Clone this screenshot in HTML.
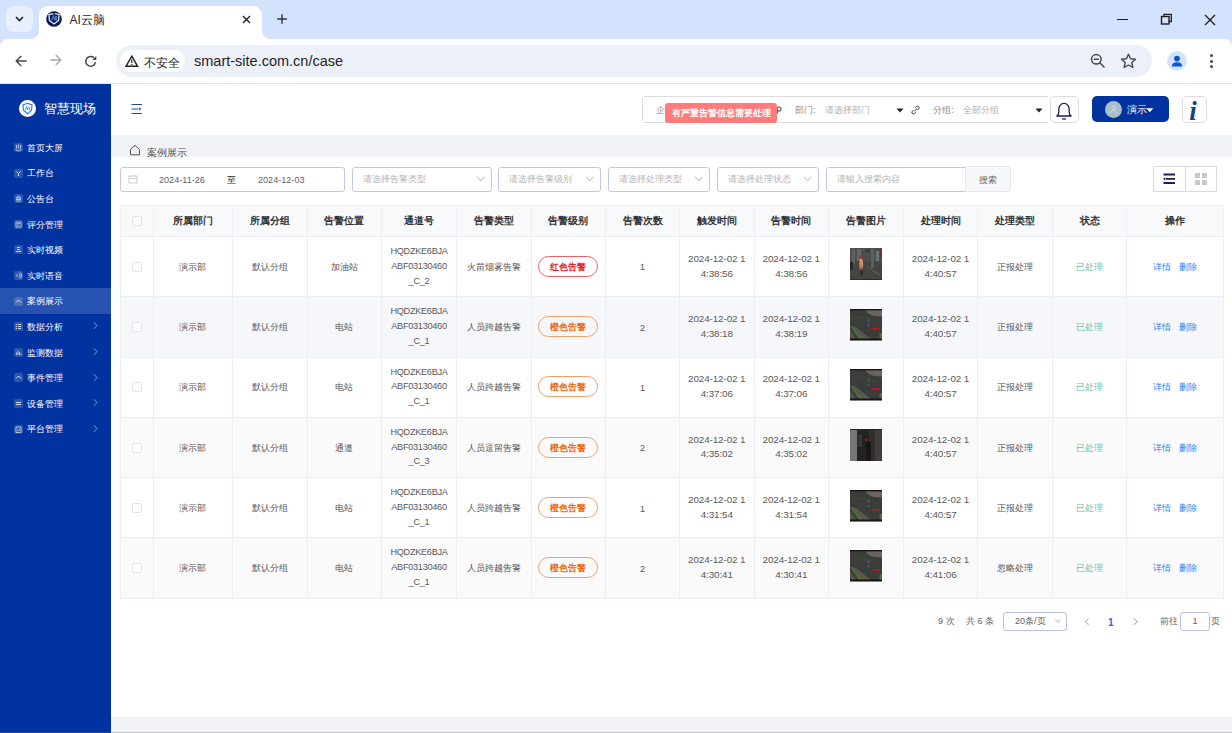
<!DOCTYPE html>
<html><head><meta charset="utf-8">
<style>
*{box-sizing:border-box}
html,body{margin:0;padding:0;width:1232px;height:733px;overflow:hidden;background:#fff;font-family:"Liberation Sans",sans-serif}
.a{position:absolute}
.nw{white-space:nowrap}
/* chrome */
#tabstrip{left:0;top:0;width:1232px;height:48px;background:#d3e3fd}
#toolbar{left:0;top:39px;width:1232px;height:44px;background:#fff;border-radius:8px 8px 0 0}
#tbline{left:0;top:83px;width:1232px;height:1px;background:#e3e3e3}
/* sidebar */
#side{left:0;top:84px;width:111px;height:649px;background:#0033a0}
.mi{position:absolute;left:0;width:111px;height:26px;color:#fff;font-size:9px;line-height:26px}
.mi .ic{position:absolute;left:13.5px;top:9px;width:9px;height:9px;border-radius:2px;background:rgba(255,255,255,.2);opacity:.85}
.mi .tx{position:absolute;left:27px;top:0.8px}
.mi .ar{position:absolute;left:91.5px;top:10.3px;width:4.5px;height:4.5px;border-right:1px solid rgba(255,255,255,.38);border-top:1px solid rgba(255,255,255,.38);transform:rotate(45deg)}
/* content */
#gray1{left:111px;top:135px;width:1121px;height:22px;background:#f0f2f5}
#gray2{left:111px;top:717px;width:1121px;height:16px;background:#f0f2f5}
.inp{position:absolute;top:167px;height:25px;border:1px solid #c0c6e6;border-radius:3px;background:#fff;font-size:9px;color:#b4b4b4;line-height:23px}
.inp .ph{position:absolute;left:10px;top:0}
.inp .dd{position:absolute;right:7.5px;top:6.2px;width:5.5px;height:5.5px;border-right:1px solid #b8bcc8;border-bottom:1px solid #b8bcc8;transform:rotate(45deg)}
table.t{position:absolute;left:120px;top:205px;border-collapse:collapse;table-layout:fixed;width:1104px}
.t td,.t th{border:1px solid #ebeef5;text-align:center;padding:0;font-size:9px;color:#555}
.t td{padding-top:1.4px}
.t th{height:31px;background:#f8f9fb;color:#303133;font-weight:bold;font-size:10px}
.t td{height:60.3px}
.t tr.s td{background:#fafafa}
.t tr.s2 td{background:#f5f7fa}
.cb{display:inline-block;width:10px;height:10px;border:1px solid #e2e4ea;border-radius:2px;background:#fff;vertical-align:middle;position:relative;top:-1px}
.code{font-size:9.2px;letter-spacing:-0.3px;line-height:14.8px;position:relative;top:-1.2px;color:#5a5a5a}
.dt{font-size:9.9px;letter-spacing:-0.12px;line-height:14.8px;position:relative;top:-0.8px;color:#5a5a5a}
.badge{display:inline-block;width:60px;height:21px;border:1px solid #e86464;border-radius:10.5px;color:#e01e1e;font-weight:bold;font-size:9px;line-height:20.5px;position:relative;top:-1px;vertical-align:middle}
.badge.o{border-color:#f0a06c;color:#ea6c14}
.thumb{display:inline-block;width:32px;height:32px;vertical-align:middle;position:relative;top:-3px}
.ok{color:#6cc0ac}
.lk{color:#2f7ff2}
</style></head>
<body>
<!-- ============ BROWSER CHROME ============ -->
<div id="tabstrip" class="a"></div>
<div class="a" style="left:6px;top:6px;width:27px;height:26px;border-radius:8px;background:#e9f0fd"></div>
<svg class="a" style="left:14px;top:14px" width="11" height="10" viewBox="0 0 11 10"><path d="M2 3 L5.5 6.5 L9 3" fill="none" stroke="#1f1f1f" stroke-width="1.6"/></svg>
<div class="a" style="left:39px;top:6px;width:223px;height:34px;background:#fff;border-radius:9px 9px 0 0"></div>
<div class="a" style="left:30px;top:30px;width:9px;height:9px;background:radial-gradient(circle at 0 0,#d3e3fd 9px,#fff 9.5px)"></div>
<div class="a" style="left:262px;top:30px;width:9px;height:9px;background:radial-gradient(circle at 100% 0,#d3e3fd 9px,#fff 9.5px)"></div>
<svg class="a" style="left:46px;top:11px" width="16" height="16" viewBox="0 0 16 16"><circle cx="8" cy="8" r="7.8" fill="#07184a"/><path d="M7.3 2.9 Q5 2.6 2.9 3.6 L3.5 9.6 L8 12.9 L12.5 9.6 L13.1 3.6 Q11 2.6 8.7 2.9" fill="none" stroke="#e6ebf5" stroke-width="1.3" stroke-linejoin="round"/><path d="M5.8 9.3 L7.3 5 L8.8 9.3" fill="none" stroke="#2f7df6" stroke-width="1.3"/><path d="M10 5 V9.3" stroke="#c8d4ea" stroke-width="1"/><path d="M6.8 9 L7.3 8 L7.8 9" fill="#c0502a"/></svg>
<div class="a nw" style="left:69.5px;top:12px;font-size:12px;line-height:17px;color:#1f1f1f">AI云脑</div>
<svg class="a" style="left:242px;top:15px" width="9" height="9" viewBox="0 0 9 9"><path d="M1 1 L8 8 M8 1 L1 8" stroke="#1f1f1f" stroke-width="1.35"/></svg>
<svg class="a" style="left:276px;top:13px" width="12" height="12" viewBox="0 0 12 12"><path d="M6 1.3 V10.8 M1.2 6 H10.8" stroke="#333" stroke-width="1.4"/></svg>
<!-- window controls -->
<div class="a" style="left:1117px;top:19px;width:11px;height:1.3px;background:#1f1f1f"></div>
<svg class="a" style="left:1160px;top:13px" width="13" height="12" viewBox="0 0 13 12"><rect x="1.5" y="3.5" width="7.5" height="7.5" fill="none" stroke="#1f1f1f" stroke-width="1.4"/><path d="M4 3.5 V1.3 H11.3 V8.5 H9" fill="none" stroke="#1f1f1f" stroke-width="1.3"/></svg>
<svg class="a" style="left:1204px;top:14px" width="12" height="12" viewBox="0 0 12 12"><path d="M1 1 L11 11 M11 1 L1 11" stroke="#1f1f1f" stroke-width="1.4"/></svg>

<div id="toolbar" class="a"></div>
<div id="tbline" class="a"></div>
<!-- nav -->
<svg class="a" style="left:13px;top:52.5px" width="16" height="16" viewBox="0 0 16 16"><path d="M13.7 8 H3.5 M8.2 3 L3.2 8 L8.2 13" fill="none" stroke="#474747" stroke-width="1.4"/></svg>
<svg class="a" style="left:48px;top:52.3px" width="16" height="16" viewBox="0 0 16 16"><path d="M2.3 8 H12.5 M7.8 3 L12.8 8 L7.8 13" fill="none" stroke="#a8a8a8" stroke-width="1.3"/></svg>
<svg class="a" style="left:83px;top:52.5px" width="16" height="16" viewBox="0 0 16 16"><path d="M10.9 4.6 A4.9 4.9 0 1 0 12.5 9.2" fill="none" stroke="#474747" stroke-width="1.5"/><path d="M9.2 7 H13.3 V2.9 Z" fill="#474747"/></svg>
<!-- omnibox -->
<div class="a" style="left:116px;top:45px;width:1036px;height:32px;border-radius:16px;background:#ecf1f9"></div>
<div class="a" style="left:120px;top:50px;width:65px;height:22px;border-radius:11px;background:#fff"></div>
<svg class="a" style="left:124px;top:54px" width="16" height="15" viewBox="0 0 16 15"><path d="M7.8 2.2 L13.6 12.3 H2 Z" fill="none" stroke="#1f1f1f" stroke-width="1.4" stroke-linejoin="miter"/><path d="M7.8 5.6 V9 M7.8 10 V11" stroke="#1f1f1f" stroke-width="1.2"/></svg>
<div class="a nw" style="left:143.8px;top:54.5px;font-size:11.5px;line-height:16px;color:#1f1f1f">不安全</div>
<div class="a nw" style="left:194px;top:52px;font-size:14.5px;line-height:18px;color:#1f1f1f">smart-site.com.cn/case</div>
<svg class="a" style="left:1090px;top:53px" width="16" height="16" viewBox="0 0 16 16"><circle cx="6.3" cy="6.3" r="4.8" fill="none" stroke="#474747" stroke-width="1.5"/><path d="M3.8 6.3 H8.8 M9.8 9.8 L14.5 14.5" stroke="#474747" stroke-width="1.5"/></svg>
<svg class="a" style="left:1120px;top:53px" width="17" height="16" viewBox="0 0 17 16"><path d="M8.5 1.3 L10.6 5.8 L15.5 6.3 L11.8 9.6 L12.9 14.5 L8.5 12 L4.1 14.5 L5.2 9.6 L1.5 6.3 L6.4 5.8 Z" fill="none" stroke="#474747" stroke-width="1.4" stroke-linejoin="round"/></svg>
<div class="a" style="left:1167px;top:51px;width:20px;height:20px;border-radius:50%;background:#d3e3fd"></div>
<svg class="a" style="left:1170px;top:54px" width="14" height="14" viewBox="0 0 14 14"><circle cx="7" cy="4.6" r="2.9" fill="#0b57d0"/><path d="M1.8 12.5 C2.2 9 4.5 8.3 7 8.3 C9.5 8.3 11.8 9 12.2 12.5 Z" fill="#0b57d0"/></svg>
<div class="a" style="left:1210px;top:54px;width:3.2px;height:3.2px;border-radius:50%;background:#474747"></div>
<div class="a" style="left:1210px;top:59.5px;width:3.2px;height:3.2px;border-radius:50%;background:#474747"></div>
<div class="a" style="left:1210px;top:65px;width:3.2px;height:3.2px;border-radius:50%;background:#474747"></div>

<!-- ============ SIDEBAR ============ -->
<div id="side" class="a"></div>
<div class="a" style="left:0;top:288px;width:111px;height:26px;background:#2652b0"></div>
<div class="a" style="left:19px;top:100px;width:17px;height:17px;border-radius:50%;background:#fff"></div>
<svg class="a" style="left:21px;top:102px" width="13" height="13" viewBox="0 0 13 13"><path d="M6.5 1.3 L11 3 L10.5 8.3 L6.5 11.8 L2.5 8.3 L2 3 Z" fill="none" stroke="#2f7de1" stroke-width="1.2"/><path d="M4.6 8.2 L5.8 4.6 L7 8.2 M8.3 4.6 V8.2" fill="none" stroke="#2f7de1" stroke-width="0.9"/></svg>
<div class="a nw" style="left:43.5px;top:101px;font-size:13px;line-height:16px;color:#fff">智慧现场</div>
<div class="mi" style="top:134.0px"><svg class="ic" width="9" height="9" viewBox="0 0 9 9"><path d="M2.5 2 V5.5 M4.5 1.5 V5.5 M6.5 2 V5.5 M1.5 6.5 L4.5 8 L7.5 6.5" stroke="#fff" stroke-width="0.8" fill="none"/></svg><span class="tx">首页大屏</span></div>
<div class="mi" style="top:159.6px"><svg class="ic" width="9" height="9" viewBox="0 0 9 9"><path d="M2.5 2.5 L4.5 4.5 L6.5 2.5 M4.5 4.5 V7" stroke="#fff" stroke-width="1" fill="none"/></svg><span class="tx">工作台</span></div>
<div class="mi" style="top:185.2px"><svg class="ic" width="9" height="9" viewBox="0 0 9 9"><path d="M2 4 L4.5 2 L7 4 Z M2 5.5 H7 M2 7 H7" stroke="#fff" stroke-width="0.8" fill="none"/></svg><span class="tx">公告台</span></div>
<div class="mi" style="top:210.8px"><svg class="ic" width="9" height="9" viewBox="0 0 9 9"><path d="M2 2 H7 V7 H2 Z M3 3.5 H6 M3 5 H5" stroke="#fff" stroke-width="0.7" fill="none"/></svg><span class="tx">评分管理</span></div>
<div class="mi" style="top:236.4px"><svg class="ic" width="9" height="9" viewBox="0 0 9 9"><path d="M3 2.5 H6 M3 4.5 H6 M2 6.5 H7" stroke="#fff" stroke-width="0.9" fill="none"/></svg><span class="tx">实时视频</span></div>
<div class="mi" style="top:262.0px"><svg class="ic" width="9" height="9" viewBox="0 0 9 9"><path d="M3 3 V6 M4.8 2.3 A2.5 2.5 0 0 1 4.8 6.7 M6 1.5 A3.5 3.5 0 0 1 6 7.5" stroke="#fff" stroke-width="0.8" fill="none"/></svg><span class="tx">实时语音</span></div>
<div class="mi" style="top:287.6px"><svg class="ic" width="9" height="9" viewBox="0 0 9 9"><path d="M2 5.5 L4.5 3 L7 5.5" stroke="#fff" stroke-width="1" fill="none"/></svg><span class="tx">案例展示</span></div>
<div class="mi" style="top:313.2px"><svg class="ic" width="9" height="9" viewBox="0 0 9 9"><path d="M1.8 2.5 H3 M4 2.5 H7.2 M1.8 4.5 H3 M4 4.5 H7.2 M1.8 6.5 H3 M4 6.5 H7.2" stroke="#fff" stroke-width="0.9" fill="none"/></svg><span class="tx">数据分析</span><i class="ar"></i></div>
<div class="mi" style="top:338.8px"><svg class="ic" width="9" height="9" viewBox="0 0 9 9"><path d="M2.5 7 V4.5 M4 7 V2.5 M5.5 7 V4 M7 7 V5.5" stroke="#fff" stroke-width="0.8" fill="none"/></svg><span class="tx">监测数据</span><i class="ar"></i></div>
<div class="mi" style="top:364.4px"><svg class="ic" width="9" height="9" viewBox="0 0 9 9"><path d="M2 5.5 L4.5 3 L7 5.5" stroke="#fff" stroke-width="1" fill="none"/></svg><span class="tx">事件管理</span><i class="ar"></i></div>
<div class="mi" style="top:390.0px"><svg class="ic" width="9" height="9" viewBox="0 0 9 9"><path d="M2 3.5 H7 M2 5.5 H7" stroke="#fff" stroke-width="1" fill="none"/></svg><span class="tx">设备管理</span><i class="ar"></i></div>
<div class="mi" style="top:415.6px"><svg class="ic" width="9" height="9" viewBox="0 0 9 9"><path d="M2 2 H7 V7.5 H2 Z M3.2 5 L4.3 6 L6 3.8" stroke="#fff" stroke-width="0.7" fill="none"/></svg><span class="tx">平台管理</span><i class="ar"></i></div>

<!-- ============ HEADER ============ -->

<svg class="a" style="left:130px;top:103px" width="13" height="13" viewBox="0 0 13 13"><path d="M1.5 1.5 H12 M1.5 6 H8.3 M1.5 10.5 H12" stroke="#24488f" stroke-width="1.1"/><path d="M9.2 4.4 L11.6 6 L9.2 7.6 Z" fill="#24488f"/></svg>
<!-- filter box -->
<div class="a" style="left:644px;top:96px;width:404px;height:27px;border-top:1px solid #dcdcdc;border-bottom:1px solid #dcdcdc"></div><div class="a" style="left:642px;top:98px;width:1px;height:23px;background:#dcdcdc"></div>
<div class="a nw" style="left:656px;top:104px;font-size:9px;line-height:12px;color:#999">企</div>
<svg class="a" style="left:776px;top:106px" width="6" height="8" viewBox="0 0 6 8"><circle cx="3" cy="3" r="2" fill="none" stroke="#555" stroke-width="1.1"/><path d="M2 5 L1.2 7.5" stroke="#555" stroke-width="1"/></svg>
<div class="a nw" style="left:795px;top:104px;font-size:9px;line-height:12px;color:#888">部门:</div>
<div class="a nw" style="left:825px;top:104px;font-size:9px;line-height:12px;color:#b0b0b0">请选择部门</div>
<svg class="a" style="left:896px;top:108px" width="8" height="5" viewBox="0 0 8 5"><path d="M0.5 0.5 H7.5 L4 4.5 Z" fill="#222"/></svg>
<svg class="a" style="left:911px;top:105px" width="9" height="10" viewBox="0 0 9 10"><path d="M3.2 6.3 L6 3.5 M4.2 2.7 L5.3 1.6 A1.6 1.6 0 0 1 7.6 3.9 L6.5 5 M2.5 5 L1.4 6.1 A1.6 1.6 0 0 0 3.7 8.4 L4.8 7.3" fill="none" stroke="#333" stroke-width="1"/></svg>
<div class="a nw" style="left:933px;top:104px;font-size:9px;line-height:12px;color:#888">分组:</div>
<div class="a nw" style="left:963px;top:104px;font-size:9px;line-height:12px;color:#b0b0b0">全部分组</div>
<svg class="a" style="left:1035px;top:108px" width="8" height="5" viewBox="0 0 8 5"><path d="M0.5 0.5 H7.5 L4 4.5 Z" fill="#222"/></svg>
<!-- tooltip -->
<div class="a nw" style="left:665px;top:103px;width:112px;height:20px;border-radius:3px;background:#ff7a7a;color:#fff;font-size:9px;line-height:21.5px;font-weight:bold;text-align:center">有严重告警信息需要处理</div>
<!-- bell -->
<div class="a" style="left:1050px;top:96px;width:29px;height:27px;border:1px solid #dcdcdc;border-radius:5px;background:#fff"></div>
<svg class="a" style="left:1054.5px;top:100.5px" width="18" height="20" viewBox="0 0 18 20"><path d="M1.8 15 Q3.8 13.8 3.8 11 V8.2 A5.2 5.8 0 0 1 14.2 8.2 V11 Q14.2 13.8 16.2 15 Z" fill="none" stroke="#1b1f5e" stroke-width="1.3" stroke-linejoin="round"/><path d="M7 18 H11" stroke="#1b1f5e" stroke-width="1.3"/></svg>
<!-- user -->
<div class="a" style="left:1092px;top:96px;width:77px;height:26px;border-radius:5px;background:#0033a0"></div>
<div class="a" style="left:1105px;top:101px;width:17px;height:17px;border-radius:50%;background:#a9bfc8"></div>
<svg class="a" style="left:1109px;top:105px" width="9" height="9" viewBox="0 0 9 9"><circle cx="4.5" cy="3" r="1.7" fill="none" stroke="#d8e4e8" stroke-width="0.8"/><path d="M1.5 8.5 C1.8 6 3 5.5 4.5 5.5 C6 5.5 7.2 6 7.5 8.5" fill="none" stroke="#d8e4e8" stroke-width="0.8"/></svg>
<div class="a nw" style="left:1126.5px;top:103.5px;font-size:9.5px;line-height:12px;color:#fff">演示</div>
<svg class="a" style="left:1145.5px;top:107.5px" width="8" height="5" viewBox="0 0 8 5"><path d="M0.3 0.3 H7.3 L3.8 4.3 Z" fill="#fff"/></svg>
<!-- info -->
<div class="a" style="left:1182px;top:96px;width:25px;height:27px;border:1px solid #dcdcdc;border-radius:5px;background:#fff"></div>
<div class="a nw" style="left:1184.5px;top:97.5px;width:17px;text-align:center;font-family:'Liberation Serif',serif;font-style:italic;font-weight:bold;font-size:27px;line-height:27px;color:#1b3e8c">i</div>


<div id="gray1" class="a"></div>
<svg class="a" style="left:129px;top:144px" width="12" height="12" viewBox="0 0 12 12"><path d="M1.5 5.5 L6 1.3 L10.5 5.5 V10.8 H1.5 Z" fill="none" stroke="#555" stroke-width="1"/></svg>
<div class="a nw" style="left:147px;top:147px;font-size:9.5px;line-height:12px;color:#555">案例展示</div>


<div class="inp" style="left:120px;width:225px">
 <svg class="a" style="left:7px;top:6px" width="10" height="10" viewBox="0 0 10 10"><rect x="1" y="2" width="8" height="7" fill="none" stroke="#c8c8c8" stroke-width="0.9"/><path d="M1 4.5 H9 M3 1 V3 M7 1 V3" stroke="#c8c8c8" stroke-width="0.9"/></svg>
 <span class="a nw" style="left:38px;top:0.8px;color:#606266;font-size:9.1px">2024-11-26</span>
 <span class="a nw" style="left:106px;top:1px;color:#303133;font-size:9px">至</span>
 <span class="a nw" style="left:137px;top:0.8px;color:#606266;font-size:9.1px">2024-12-03</span>
</div>
<div class="inp" style="left:352px;width:140px"><span class="ph nw">请选择告警类型</span><i class="dd"></i></div>
<div class="inp" style="left:498px;width:103px"><span class="ph nw">请选择告警级别</span><i class="dd"></i></div>
<div class="inp" style="left:608px;width:102px"><span class="ph nw">请选择处理类型</span><i class="dd"></i></div>
<div class="inp" style="left:717px;width:102px"><span class="ph nw">请选择处理状态</span><i class="dd"></i></div>
<div class="inp" style="left:826px;width:140px;border-radius:3px 0 0 3px"><span class="ph nw">请输入搜索内容</span></div>
<div class="a nw" style="left:965px;top:166px;width:46px;height:26px;background:#f5f7fa;border:1px solid #e4e7ed;border-radius:0 3px 3px 0;font-size:9px;line-height:26px;color:#666;text-align:center">搜索</div>
<div class="a" style="left:1153px;top:166px;width:64px;height:26px;border:1px solid #d8dae0;background:#fff"></div>
<div class="a" style="left:1185px;top:166px;width:1px;height:26px;background:#d8dae0"></div>
<svg class="a" style="left:1162px;top:173px" width="14" height="12" viewBox="0 0 14 12"><path d="M1.5 1.5 H13 M4 5.8 H13 M1.5 10 H13" stroke="#1b1f5e" stroke-width="1.8"/><path d="M1 5.8 L3.3 4.2 V7.4 Z" fill="#1b1f5e"/></svg>
<div class="a" style="left:1195px;top:172.5px;width:5px;height:5px;background:#c9c9c9"></div>
<div class="a" style="left:1202px;top:172.5px;width:5px;height:5px;background:#c9c9c9"></div>
<div class="a" style="left:1195px;top:180px;width:5px;height:5px;background:#c9c9c9"></div>
<div class="a" style="left:1202px;top:180px;width:5px;height:5px;background:#c9c9c9"></div>

<table class="t"><colgroup>
<col style="width:32.5px">
<col style="width:79px">
<col style="width:75px">
<col style="width:74.5px">
<col style="width:75px">
<col style="width:74.5px">
<col style="width:74.5px">
<col style="width:74px">
<col style="width:74.5px">
<col style="width:74.5px">
<col style="width:75px">
<col style="width:74px">
<col style="width:75px">
<col style="width:74px">
<col style="width:97px">
</colgroup>
<tr><th><i class=cb></i></th><th>所属部门</th><th>所属分组</th><th>告警位置</th><th>通道号</th><th>告警类型</th><th>告警级别</th><th>告警次数</th><th>触发时间</th><th>告警时间</th><th>告警图片</th><th>处理时间</th><th>处理类型</th><th>状态</th><th>操作</th></tr>
<tr><td><i class="cb"></i></td><td>演示部</td><td>默认分组</td><td>加油站</td><td><div class="code">HQDZKE6BJA<br>ABF03130460<br>_C_2</div></td><td>火苗烟雾告警</td><td><span class="badge">红色告警</span></td><td>1</td><td><div class="dt">2024-12-02 1<br>4:38:56</div></td><td><div class="dt">2024-12-02 1<br>4:38:56</div></td><td><svg class="thumb" width="32" height="32" viewBox="0 0 32 32"><defs><filter id="bl" x="-10%" y="-10%" width="120%" height="120%"><feGaussianBlur stdDeviation="0.6"/></filter><linearGradient id="pg" x1="0" y1="0" x2="0" y2="1"><stop offset="0" stop-color="#e0a878"/><stop offset="0.7" stop-color="#b07850"/><stop offset="1" stop-color="#3a2a22"/></linearGradient></defs><g filter="url(#bl)"><rect width="32" height="32" fill="#434543"/><rect x="0" y="0" width="32" height="13" fill="#4c4f4e"/><rect x="2" y="1" width="3" height="15" fill="#5d605f"/><rect x="7" y="1" width="4" height="12" fill="#646766"/><rect x="21" y="1" width="3" height="19" fill="#595e5d"/><rect x="15" y="1" width="5" height="3.5" fill="#2d4a34"/><rect x="26" y="3" width="3" height="10" fill="#66746f"/><rect x="30" y="1" width="1.5" height="8" fill="#6a3030"/><rect x="0" y="14" width="3" height="8" fill="#2a2c2c"/><ellipse cx="11.2" cy="17" rx="2" ry="6.5" fill="url(#pg)"/><rect x="9" y="8.6" width="4" height="1.8" fill="#c02020"/><rect x="10.5" y="22" width="2.5" height="5" fill="#2e2a26"/><path d="M17 18.5 L30 27" stroke="#7d7350" stroke-width="0.6"/><rect x="24" y="30" width="2" height="1.5" fill="#a02020"/><rect x="0" y="31" width="32" height="1" fill="#2e2e2e"/></g></svg></td><td><div class="dt">2024-12-02 1<br>4:40:57</div></td><td>正报处理</td><td><span class="ok">已处理</span></td><td><span class="lk">详情</span>&nbsp;&nbsp;&nbsp;<span class="lk">删除</span></td></tr>
<tr class="s2"><td><i class="cb"></i></td><td>演示部</td><td>默认分组</td><td>电站</td><td><div class="code">HQDZKE6BJA<br>ABF03130460<br>_C_1</div></td><td>人员跨越告警</td><td><span class="badge o">橙色告警</span></td><td>2</td><td><div class="dt">2024-12-02 1<br>4:38:18</div></td><td><div class="dt">2024-12-02 1<br>4:38:19</div></td><td><svg class="thumb" width="32" height="32" viewBox="0 0 32 32"><g filter="url(#bl)"><rect width="32" height="32" fill="#3a3d3a"/><path d="M15 1.2 H32 V7.5 L24 7 L19 5 Z" fill="#6c655f"/><path d="M1 11 Q14 4 28 15" fill="none" stroke="#3b4f38" stroke-width="0.8"/><path d="M0 17 L3 17 L14 30 L9 30 Z" fill="#4d6a3e"/><path d="M3 17 L6 18 L21 30 L14 30 Z" fill="#5b574c"/><path d="M0 21 L0 30 L6 30 Z" fill="#57534a"/><circle cx="18.5" cy="11.5" r="1.2" fill="#4c5a6c"/><circle cx="18.5" cy="16" r="1.2" fill="#4a586a"/><rect x="22.5" y="19" width="7.5" height="1.7" fill="#c41818"/><path d="M29.5 24 H32 V30 H29.5 Z" fill="#4f6a3f"/><rect x="0" y="0" width="32" height="1.3" fill="#151515"/><rect x="0" y="29.5" width="32" height="1.6" fill="#151515"/><rect x="0" y="31" width="32" height="1" fill="#808080"/></g></svg></td><td><div class="dt">2024-12-02 1<br>4:40:57</div></td><td>正报处理</td><td><span class="ok">已处理</span></td><td><span class="lk">详情</span>&nbsp;&nbsp;&nbsp;<span class="lk">删除</span></td></tr>
<tr><td><i class="cb"></i></td><td>演示部</td><td>默认分组</td><td>电站</td><td><div class="code">HQDZKE6BJA<br>ABF03130460<br>_C_1</div></td><td>人员跨越告警</td><td><span class="badge o">橙色告警</span></td><td>1</td><td><div class="dt">2024-12-02 1<br>4:37:06</div></td><td><div class="dt">2024-12-02 1<br>4:37:06</div></td><td><svg class="thumb" width="32" height="32" viewBox="0 0 32 32"><g filter="url(#bl)"><rect width="32" height="32" fill="#3a3d3a"/><path d="M15 1.2 H32 V7.5 L24 7 L19 5 Z" fill="#6c655f"/><path d="M1 11 Q14 4 28 15" fill="none" stroke="#3b4f38" stroke-width="0.8"/><path d="M0 17 L3 17 L14 30 L9 30 Z" fill="#4d6a3e"/><path d="M3 17 L6 18 L21 30 L14 30 Z" fill="#5b574c"/><path d="M0 21 L0 30 L6 30 Z" fill="#57534a"/><circle cx="18.5" cy="11.5" r="1.2" fill="#4c5a6c"/><circle cx="18.5" cy="16" r="1.2" fill="#4a586a"/><rect x="22.5" y="19" width="7.5" height="1.7" fill="#c41818"/><path d="M29.5 24 H32 V30 H29.5 Z" fill="#4f6a3f"/><rect x="0" y="0" width="32" height="1.3" fill="#151515"/><rect x="0" y="29.5" width="32" height="1.6" fill="#151515"/><rect x="0" y="31" width="32" height="1" fill="#808080"/></g></svg></td><td><div class="dt">2024-12-02 1<br>4:40:57</div></td><td>正报处理</td><td><span class="ok">已处理</span></td><td><span class="lk">详情</span>&nbsp;&nbsp;&nbsp;<span class="lk">删除</span></td></tr>
<tr class="s"><td><i class="cb"></i></td><td>演示部</td><td>默认分组</td><td>通道</td><td><div class="code">HQDZKE6BJA<br>ABF03130460<br>_C_3</div></td><td>人员逗留告警</td><td><span class="badge o">橙色告警</span></td><td>2</td><td><div class="dt">2024-12-02 1<br>4:35:02</div></td><td><div class="dt">2024-12-02 1<br>4:35:02</div></td><td><svg class="thumb" width="32" height="32" viewBox="0 0 32 32"><g filter="url(#bl)"><rect width="32" height="32" fill="#423e3a"/><rect x="0" y="0" width="7" height="32" fill="#767676"/><rect x="7" y="0" width="12" height="32" fill="#252422"/><rect x="8" y="6" width="4" height="12" fill="#363632"/><rect x="19" y="0" width="6" height="32" fill="#312e2b"/><rect x="16" y="13" width="5" height="19" fill="#151412"/><circle cx="17" cy="14.5" r="2" fill="#1a1815"/><rect x="15.5" y="10" width="1.6" height="2" fill="#b02020"/><rect x="0" y="0" width="32" height="1" fill="#2a2826"/></g></svg></td><td><div class="dt">2024-12-02 1<br>4:40:57</div></td><td>正报处理</td><td><span class="ok">已处理</span></td><td><span class="lk">详情</span>&nbsp;&nbsp;&nbsp;<span class="lk">删除</span></td></tr>
<tr><td><i class="cb"></i></td><td>演示部</td><td>默认分组</td><td>电站</td><td><div class="code">HQDZKE6BJA<br>ABF03130460<br>_C_1</div></td><td>人员跨越告警</td><td><span class="badge o">橙色告警</span></td><td>1</td><td><div class="dt">2024-12-02 1<br>4:31:54</div></td><td><div class="dt">2024-12-02 1<br>4:31:54</div></td><td><svg class="thumb" width="32" height="32" viewBox="0 0 32 32"><g filter="url(#bl)"><rect width="32" height="32" fill="#3a3d3a"/><path d="M15 1.2 H32 V7.5 L24 7 L19 5 Z" fill="#6c655f"/><path d="M1 11 Q14 4 28 15" fill="none" stroke="#3b4f38" stroke-width="0.8"/><path d="M0 17 L3 17 L14 30 L9 30 Z" fill="#4d6a3e"/><path d="M3 17 L6 18 L21 30 L14 30 Z" fill="#5b574c"/><path d="M0 21 L0 30 L6 30 Z" fill="#57534a"/><circle cx="18.5" cy="11.5" r="1.2" fill="#4c5a6c"/><circle cx="18.5" cy="16" r="1.2" fill="#4a586a"/><rect x="22.5" y="19" width="7.5" height="1.7" fill="#c41818"/><path d="M29.5 24 H32 V30 H29.5 Z" fill="#4f6a3f"/><rect x="0" y="0" width="32" height="1.3" fill="#151515"/><rect x="0" y="29.5" width="32" height="1.6" fill="#151515"/><rect x="0" y="31" width="32" height="1" fill="#808080"/></g></svg></td><td><div class="dt">2024-12-02 1<br>4:40:57</div></td><td>正报处理</td><td><span class="ok">已处理</span></td><td><span class="lk">详情</span>&nbsp;&nbsp;&nbsp;<span class="lk">删除</span></td></tr>
<tr class="s"><td><i class="cb"></i></td><td>演示部</td><td>默认分组</td><td>电站</td><td><div class="code">HQDZKE6BJA<br>ABF03130460<br>_C_1</div></td><td>人员跨越告警</td><td><span class="badge o">橙色告警</span></td><td>2</td><td><div class="dt">2024-12-02 1<br>4:30:41</div></td><td><div class="dt">2024-12-02 1<br>4:30:41</div></td><td><svg class="thumb" width="32" height="32" viewBox="0 0 32 32"><g filter="url(#bl)"><rect width="32" height="32" fill="#3a3d3a"/><path d="M15 1.2 H32 V7.5 L24 7 L19 5 Z" fill="#6c655f"/><path d="M1 11 Q14 4 28 15" fill="none" stroke="#3b4f38" stroke-width="0.8"/><path d="M0 17 L3 17 L14 30 L9 30 Z" fill="#4d6a3e"/><path d="M3 17 L6 18 L21 30 L14 30 Z" fill="#5b574c"/><path d="M0 21 L0 30 L6 30 Z" fill="#57534a"/><circle cx="18.5" cy="11.5" r="1.2" fill="#4c5a6c"/><circle cx="18.5" cy="16" r="1.2" fill="#4a586a"/><rect x="22.5" y="19" width="7.5" height="1.7" fill="#c41818"/><path d="M29.5 24 H32 V30 H29.5 Z" fill="#4f6a3f"/><rect x="0" y="0" width="32" height="1.3" fill="#151515"/><rect x="0" y="29.5" width="32" height="1.6" fill="#151515"/><rect x="0" y="31" width="32" height="1" fill="#808080"/></g></svg></td><td><div class="dt">2024-12-02 1<br>4:41:06</div></td><td>忽略处理</td><td><span class="ok">已处理</span></td><td><span class="lk">详情</span>&nbsp;&nbsp;&nbsp;<span class="lk">删除</span></td></tr>
</table>

<div class="a nw" style="left:938px;top:615px;font-size:9px;line-height:13px;color:#606266">9 次</div>
<div class="a nw" style="left:966px;top:615px;font-size:9px;line-height:13px;color:#606266">共 6 条</div>
<div class="a" style="left:1003px;top:612px;width:64px;height:19px;border:1px solid #b8bfe0;border-radius:3px"></div>
<div class="a nw" style="left:1015px;top:615px;font-size:9px;line-height:13px;color:#606266">20条/页</div>
<i class="a" style="left:1056px;top:617.5px;width:4px;height:4px;border-right:1px solid #c0c4cc;border-bottom:1px solid #c0c4cc;transform:rotate(45deg)"></i>
<i class="a" style="left:1086px;top:619px;width:4.5px;height:4.5px;border-left:1px solid #b0b3bb;border-bottom:1px solid #b0b3bb;transform:rotate(45deg)"></i>
<div class="a nw" style="left:1108px;top:615.5px;font-size:10px;line-height:13px;color:#1a6ee8;font-weight:bold">1</div>
<i class="a" style="left:1132px;top:619px;width:4.5px;height:4.5px;border-right:1px solid #b0b3bb;border-top:1px solid #b0b3bb;transform:rotate(45deg)"></i>
<div class="a nw" style="left:1160px;top:615px;font-size:9px;line-height:13px;color:#606266">前往</div>
<div class="a" style="left:1180px;top:612px;width:30px;height:19px;border:1px solid #b8bfe0;border-radius:3px;font-size:9px;line-height:17px;color:#606266;text-align:center">1</div>
<div class="a nw" style="left:1211px;top:615px;font-size:9px;line-height:13px;color:#606266">页</div>

<div id="gray2" class="a"></div>
<div class="a" style="left:0;top:732px;width:1232px;height:1px;background:rgba(110,110,120,.35)"></div>
</body></html>
